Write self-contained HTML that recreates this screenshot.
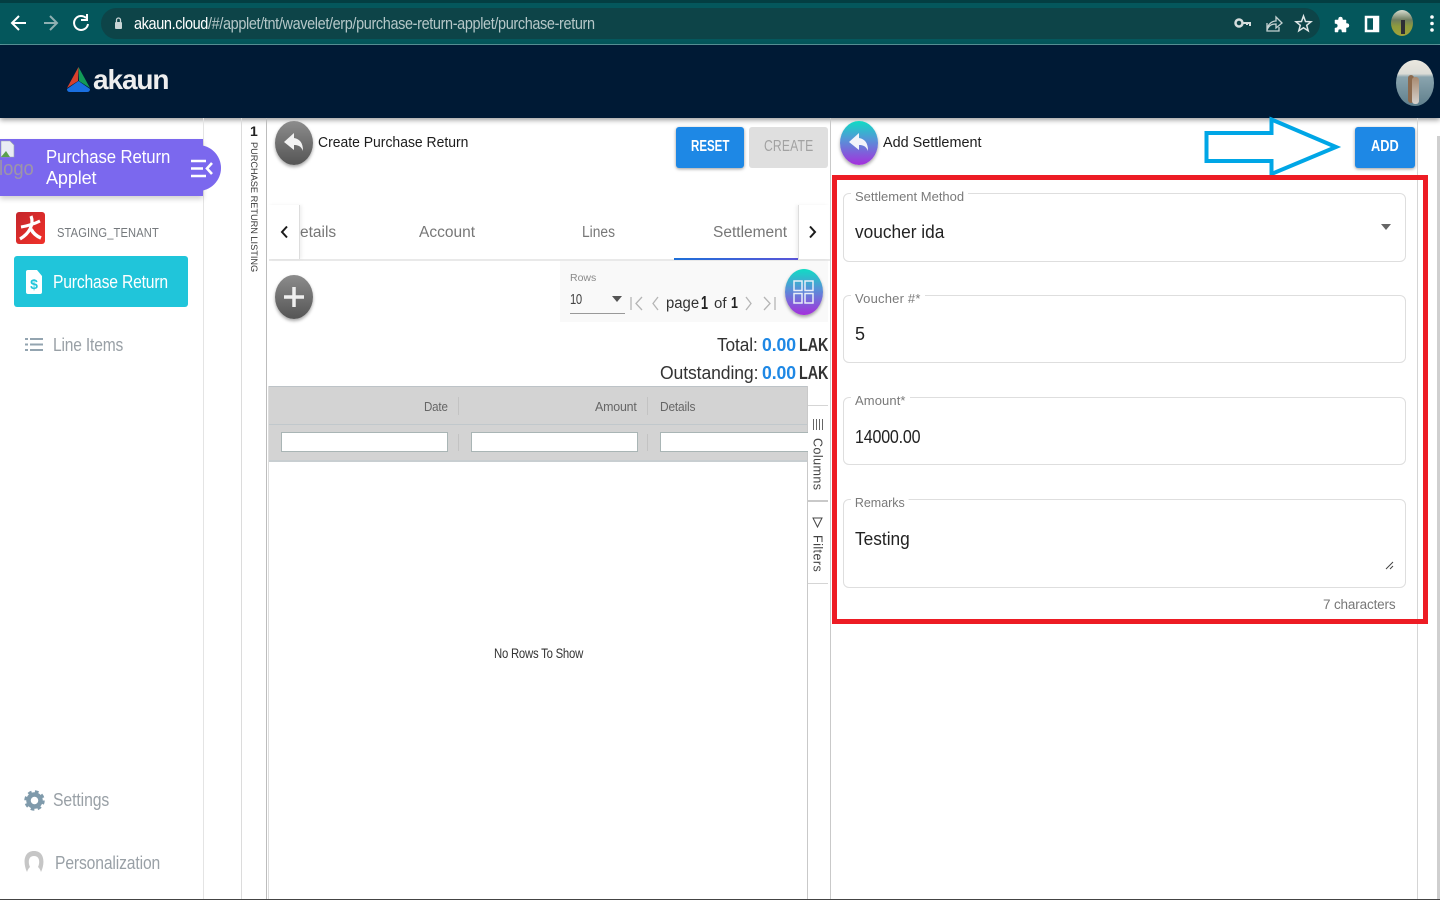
<!DOCTYPE html>
<html><head><meta charset="utf-8"><title>Akaun</title>
<style>
html,body{margin:0;padding:0;width:1440px;height:900px;overflow:hidden;background:#fff;font-family:"Liberation Sans",sans-serif}
.a{position:absolute}
.t{position:absolute;white-space:nowrap;line-height:1;transform-origin:left top}
.fs{position:absolute;left:843px;width:561px;border:1px solid #dedede;border-radius:6px;background:#fff}
.lb{position:absolute;left:851px;background:#fff;padding:0 4px;color:#7a7a7a;font-size:13px;line-height:14px;white-space:nowrap}
.val{position:absolute;left:855px;font-size:18px;line-height:20px;color:#222;white-space:nowrap;transform-origin:left top}
.ball{position:absolute;width:38px;height:44px;border-radius:50%;box-shadow:0 2px 3px rgba(0,0,0,.35)}
.g{background:linear-gradient(#8c8c8c,#555)}
.c{background:linear-gradient(#10dcc4,#5a8fd8 45%,#a52fdc)}
.fi{position:absolute;top:432px;height:18px;background:#fff;border:1px solid #a9b5b5}
</style></head><body>

<!-- browser bar -->
<div class="a" style="left:0;top:0;width:1440px;height:44px;background:#04575c"></div>
<div class="a" style="left:0;top:0;width:1440px;height:3px;background:#033e42"></div>
<div class="a" style="left:0;top:44px;width:1440px;height:1px;background:#5b9a9d"></div>
<div class="a" style="left:101px;top:8px;width:1219px;height:31px;border-radius:16px;background:#0d4448"></div>
<svg class="a" style="left:0;top:-1px" width="130" height="44" fill="none" stroke-width="2">
<path d="M26 24H13M19 17l-7 7 7 7" stroke="#fff"/>
<path d="M44 24h12M50 17l7 7-7 7" stroke="#8fb0b2"/>
<path d="M86 19a7 7 0 1 0 2 6M87 15v6h-6" stroke="#fff"/>
<rect x="115" y="23" width="7" height="7" rx="1" fill="#c9d5d6" stroke="none"/><path d="M116.500 23v-2a2 2 0 0 1 4 0v2" stroke="#c9d5d6" stroke-width="1.300"/>
</svg>
<div class="t" style="left:134px;top:16px;font-size:16.500px;letter-spacing:-.42px;color:#fff;transform:scaleX(.877)">akaun.cloud<span style="color:#b5c7c8">/#/applet/tnt/wavelet/erp/purchase-return-applet/purchase-return</span></div>
<svg class="a" style="left:1230px;top:8px" width="210" height="30" fill="none">
<circle cx="9" cy="15" r="3.500" stroke="#d5dddd" stroke-width="2.500"/><path d="M12 15h8v3M17 15v2" stroke="#d5dddd" stroke-width="2"/>
<path d="M37 15v8h12v-4M37 22c1-7 6-9 9-9v-4l6 6-6 5v-4c-4 0-7 1-9 6z" stroke="#c5d2d2" stroke-width="1.300"/>
<path d="M73.500 8l2 5.500 5.500.300-4.300 3.500 1.500 5.500-4.700-3-4.700 3 1.500-5.500-4.300-3.500 5.500-.300z" stroke="#dfe6e6" stroke-width="1.500"/>
<path d="M105 12h3.500v-1a2 2 0 0 1 4 0v1h3.500v3.500h1a2 2 0 0 1 0 4h-1V24h-4v-1a2 2 0 0 0-4 0v1h-3v-4h1a2.300 2.300 0 0 0 0-4.500h-1z" fill="#fff" stroke="#fff" stroke-width=".5"/>
<rect x="136" y="9" width="12" height="14" stroke="#fff" stroke-width="2.500"/><rect x="143" y="9" width="5" height="14" fill="#fff"/>
<circle cx="202" cy="9" r="1.800" fill="#fff"/><circle cx="202" cy="15.500" r="1.800" fill="#fff"/><circle cx="202" cy="22" r="1.800" fill="#fff"/>
</svg>
<div class="a" style="left:1391px;top:10px;width:22px;height:26px;border-radius:50%;background:linear-gradient(#d8ddd0 0,#6f7d60 38%,#8d9a3e 62%,#a3a33a);overflow:hidden"><div class="a" style="left:10px;top:10px;width:4px;height:14px;background:#2e2e35"></div></div>

<!-- app header -->
<div class="a" style="left:0;top:45px;width:1440px;height:73px;background:#001a35;box-shadow:0 2px 5px rgba(0,0,0,.4)"></div>
<svg class="a" style="left:66px;top:66px" width="26" height="28">
<path d="M12.500 1L1 22l11-7z" fill="#d8402c"/><path d="M12.500 1L24 22l-11-7z" fill="#129a58"/><path d="M12.500 15L1 23q0 3 3 3h17q3 0 3-3z" fill="#1a6fe0"/>
</svg>
<div class="t" style="left:93px;top:66px;font-size:28px;font-weight:bold;letter-spacing:-1.100px;color:#eee;line-height:28px">akaun</div>
<div class="a" style="left:1396px;top:60px;width:38px;height:46px;border-radius:50%;background:linear-gradient(#ebe8e0 0,#dcdcd6 30%,#8aa4ae 37%,#5f7f8c 100%);overflow:hidden">
<div class="a" style="left:12px;top:15px;width:6px;height:28px;border-radius:3px;background:#8c6a4e"></div>
<div class="a" style="left:16px;top:17px;width:7px;height:27px;border-radius:3px;background:linear-gradient(#a88a70,#d6d2ce)"></div></div>

<!-- sidebar -->
<div class="a" style="left:203px;top:118px;width:1px;height:782px;background:#e4e4e4"></div>
<div class="a" style="left:241px;top:118px;width:1px;height:782px;background:#dcdcdc"></div>
<div class="a" style="left:266px;top:118px;width:1px;height:782px;background:#bdbdbd"></div>
<div class="a" style="left:0;top:139px;width:203px;height:57px;background:#7b68ee;box-shadow:0 3px 5px rgba(0,0,0,.18)"></div>
<div class="a" style="left:190px;top:145px;width:31px;height:46px;border-radius:0 23px 23px 0;background:#7b68ee"></div>
<svg class="a" style="left:0;top:140px" width="16" height="20"><path d="M1 1h9l4 4v12H1z" fill="#e9edf4" stroke="#9aa" stroke-width=".6"/><path d="M1 17l5-6 4 6z" fill="#5aa04e"/></svg>
<div class="t" style="left:-1px;top:159px;font-size:20px;color:#9d95a8;transform:scaleX(.92)">logo</div>
<div class="t" style="left:46px;top:148px;font-size:18px;letter-spacing:-.1px;color:#fff;transform:scaleX(.93)">Purchase Return</div>
<div class="t" style="left:46px;top:169px;font-size:18px;letter-spacing:-.1px;color:#fff">Applet</div>
<svg class="a" style="left:190px;top:159px" width="24" height="20" fill="none" stroke="#fff" stroke-width="2.600"><path d="M1 2h15M1 9.500h12M1 17h15M22 4l-5 5.500 5 5.500"/></svg>
<div class="a" style="left:16px;top:212px;width:29px;height:32px;border-radius:3px;background:linear-gradient(135deg,#c4262b,#f0312a)"></div>
<svg class="a" style="left:16px;top:212px" width="29" height="32" fill="none" stroke="#fff"><path d="M15 4c2 5 1 9-1 13-2 4-5 7-10 10" stroke-width="3.200"/><path d="M5 15c6-1 13-3 19-6" stroke-width="3"/><path d="M15 17c2 4 5 7 10 9" stroke-width="3.600"/></svg>
<div class="t" style="left:57px;top:226px;font-size:13px;letter-spacing:.15px;color:#75797d;transform:scaleX(.857)">STAGING_TENANT</div>
<div class="a" style="left:14px;top:256px;width:174px;height:51px;border-radius:3px;background:#20c5da"></div>
<svg class="a" style="left:26px;top:270px" width="17" height="24"><path d="M2 0h9l5 6v16q0 2-2 2H2q-2 0-2-2V2q0-2 2-2z" fill="#fff"/><text x="8" y="19" font-size="14" font-weight="bold" font-family="Liberation Sans" fill="#20c5da" text-anchor="middle">$</text></svg>
<div class="t" style="left:53px;top:273px;font-size:18px;letter-spacing:-.2px;color:#fff;transform:scaleX(.87)">Purchase Return</div>
<svg class="a" style="left:25px;top:337px" width="19" height="15" stroke="#93a4b0" stroke-width="2"><path d="M0 2h3M5 2h13M0 7.500h3M5 7.500h13M0 13h3M5 13h13"/></svg>
<div class="t" style="left:53px;top:336px;font-size:18px;letter-spacing:-.2px;color:#99a0a6;transform:scaleX(.865)">Line Items</div>
<svg class="a" style="left:24px;top:789px" width="21" height="23"><circle cx="10.500" cy="11.500" r="6" fill="none" stroke="#7f9aab" stroke-width="4.500"/><circle cx="10.500" cy="11.500" r="8.500" fill="none" stroke="#7f9aab" stroke-width="3.500" stroke-dasharray="3.500 3.200"/></svg>
<div class="t" style="left:53px;top:791px;font-size:18px;letter-spacing:-.1px;color:#99a0a6;transform:scaleX(.875)">Settings</div>
<svg class="a" style="left:24px;top:850px" width="20" height="22"><path d="M3 22C-1 14-1 1 10 1s11 13 7 21c-1-3-2-4-3-5 2-4 2-11-4-11S4 13 6 17c-1 1-2 2-3 5z" fill="#c6c6c6"/></svg>
<div class="t" style="left:55px;top:854px;font-size:18px;letter-spacing:-.15px;color:#99a0a6;transform:scaleX(.87)">Personalization</div>

<!-- vertical listing -->
<div class="t" style="left:250px;top:124px;font-size:14px;font-weight:bold;color:#222">1</div>
<div class="t" style="left:249px;top:142px;font-size:9.200px;color:#3a3a3a;writing-mode:vertical-rl">PURCHASE RETURN LISTING</div>

<!-- middle panel -->
<div class="ball g" style="left:275px;top:121px"></div>
<svg class="a" style="left:283px;top:132px" width="22" height="22"><path d="M11 1L1 10l10 8v-5c4 0 7 1 9 6 0-8-3-12-9-13z" fill="#f2f2f2"/></svg>
<div class="t" style="left:318px;top:135px;font-size:15px;color:#1d1d1d;transform:scaleX(.93)">Create Purchase Return</div>
<div class="a" style="left:676px;top:127px;width:68px;height:41px;border-radius:3px;background:#1e88e5;box-shadow:0 1px 3px rgba(0,0,0,.4)"></div>
<div class="t" style="left:691px;top:139px;font-size:16px;font-weight:bold;color:#fff;transform:scaleX(.72)">RESET</div>
<div class="a" style="left:749px;top:127px;width:79px;height:41px;border-radius:3px;background:#dfdfdf"></div>
<div class="t" style="left:764px;top:139px;font-size:16px;letter-spacing:.2px;color:#a2a2a2;transform:scaleX(.76)">CREATE</div>

<div class="t" style="left:300px;top:225px;font-size:15.500px;color:#777">etails</div>
<div class="t" style="left:419px;top:225px;font-size:15.500px;color:#777">Account</div>
<div class="t" style="left:582px;top:225px;font-size:15.500px;color:#777;transform:scaleX(.89)">Lines</div>
<div class="t" style="left:713px;top:225px;font-size:15.500px;color:#777">Settlement</div>
<div class="a" style="left:269px;top:259px;width:561px;height:2px;background:#e9e9e9"></div>
<div class="a" style="left:674px;top:258px;width:124px;height:2px;background:linear-gradient(90deg,#1d6fd8,#5a55d8)"></div>
<div class="a" style="left:268px;top:205px;width:31px;height:54px;background:#fff;border-right:1px solid #ddd;box-shadow:2px 0 3px rgba(0,0,0,.06)"></div>
<div class="a" style="left:798px;top:205px;width:30px;height:54px;background:#fff;border-left:1px solid #ddd;box-shadow:-2px 0 3px rgba(0,0,0,.06)"></div>
<svg class="a" style="left:280px;top:225px" width="10" height="14" fill="none" stroke="#1b1b1b" stroke-width="2"><path d="M7 1.500L2 7l5 5.500"/></svg>
<svg class="a" style="left:808px;top:225px" width="10" height="14" fill="none" stroke="#1b1b1b" stroke-width="2"><path d="M2 1.500L7 7l-5 5.500"/></svg>

<div class="ball g" style="left:275px;top:275px"></div>
<svg class="a" style="left:284px;top:287px" width="20" height="20" stroke="#efefef" stroke-width="3.500"><path d="M10 0v20M0 10h20"/></svg>

<div class="a" style="left:560px;top:261px;width:268px;height:61px;background:#f9f9f9"></div>
<div class="t" style="left:570px;top:273px;font-size:10.500px;color:#8a8a8a">Rows</div>
<div class="t" style="left:570px;top:292px;font-size:15px;letter-spacing:-.5px;color:#444;transform:scaleX(.75)">10</div>
<svg class="a" style="left:612px;top:296px" width="10" height="6"><path d="M0 0h10L5 6z" fill="#555"/></svg>
<div class="a" style="left:570px;top:313px;width:55px;height:1px;background:#999"></div>
<svg class="a" style="left:628px;top:296px" width="150" height="15" fill="none" stroke="#b5b5b5" stroke-width="1.300"><path d="M3 1v13M14 1L8 7.500l6 6.500M30 1l-5 6.500 5 6.500M118 1l5 6.500-5 6.500M136 1l6 6.500-6 6.500M147 1v13"/></svg>
<div class="t" style="left:666px;top:296px;font-size:15.500px;color:#333;transform:scaleX(.96)">page</div>
<div class="t" style="left:701px;top:294px;font-size:18px;font-weight:bold;color:#222;transform:scaleX(.7)">1</div>
<div class="t" style="left:714px;top:296px;font-size:15px;color:#333">of</div>
<div class="t" style="left:731px;top:296px;font-size:15.500px;font-weight:bold;color:#222;transform:scaleX(.8)">1</div>
<div class="ball c" style="left:785px;top:269px;height:46px"></div>
<svg class="a" style="left:793px;top:280px" width="21" height="24" fill="none" stroke="#e8eef8" stroke-width="1.500"><rect x="1" y="1" width="8" height="9.500"/><rect x="12" y="1" width="8" height="9.500"/><rect x="1" y="13.500" width="8" height="9.500"/><rect x="12" y="13.500" width="8" height="9.500"/></svg>

<div class="t" style="left:717px;top:336px;font-size:18px;color:#333;letter-spacing:-.1px;transform:scaleX(.96)">Total:</div>
<div class="t" style="left:762px;top:336px;font-size:18px;font-weight:bold;color:#1e88e5;letter-spacing:-.1px;transform:scaleX(.98)">0.00</div>
<div class="t" style="left:799px;top:336px;font-size:18px;font-weight:bold;color:#333;letter-spacing:-.1px;transform:scaleX(.8)">LAK</div>
<div class="t" style="left:660px;top:364px;font-size:18px;color:#333;letter-spacing:-.1px;transform:scaleX(.975)">Outstanding:</div>
<div class="t" style="left:762px;top:364px;font-size:18px;font-weight:bold;color:#1e88e5;letter-spacing:-.1px;transform:scaleX(.98)">0.00</div>
<div class="t" style="left:799px;top:364px;font-size:18px;font-weight:bold;color:#333;letter-spacing:-.1px;transform:scaleX(.8)">LAK</div>

<!-- grid -->
<div class="a" style="left:268px;top:386px;width:1px;height:514px;background:#ddd"></div>
<div class="a" style="left:807px;top:386px;width:1px;height:514px;background:#c9c9c9"></div>
<div class="a" style="left:269px;top:386px;width:538px;height:38px;background:#d3d3d3;border-top:1px solid #bdc3c7;box-sizing:border-box"></div>
<div class="a" style="left:269px;top:424px;width:538px;height:1px;background:#c1c8cc"></div>
<div class="a" style="left:269px;top:425px;width:538px;height:35px;background:#d3d3d3"></div>
<div class="a" style="left:269px;top:460px;width:538px;height:2px;background:#c8ced1"></div>
<div class="t" style="left:424px;top:400px;font-size:13px;letter-spacing:-.2px;color:#666;transform:scaleX(.89)">Date</div>
<div class="t" style="left:595px;top:400px;font-size:13px;letter-spacing:-.2px;color:#666;transform:scaleX(.955)">Amount</div>
<div class="t" style="left:660px;top:400px;font-size:13px;letter-spacing:-.2px;color:#666;transform:scaleX(.92)">Details</div>
<div class="a" style="left:458px;top:397px;width:1px;height:18px;background:#c3c3c3"></div>
<div class="a" style="left:647px;top:397px;width:1px;height:18px;background:#c3c3c3"></div>
<div class="a" style="left:458px;top:434px;width:1px;height:17px;background:#c3c3c3"></div>
<div class="a" style="left:647px;top:434px;width:1px;height:17px;background:#c3c3c3"></div>
<div class="fi" style="left:281px;width:165px"></div>
<div class="fi" style="left:471px;width:165px"></div>
<div class="fi" style="left:660px;width:147px;border-right:0"></div>
<div class="t" style="left:494px;top:647px;font-size:13.500px;letter-spacing:-.27px;color:#333;transform:scaleX(.84)">No Rows To Show</div>

<!-- side buttons -->
<div class="a" style="left:808px;top:386px;width:20px;height:514px;background:#fff"></div>
<div class="a" style="left:808px;top:405px;width:20px;height:1px;background:#d5d5d5"></div>
<div class="a" style="left:808px;top:500px;width:20px;height:2px;background:#c9c9c9"></div>
<div class="a" style="left:808px;top:583px;width:20px;height:1px;background:#d5d5d5"></div>
<svg class="a" style="left:812px;top:419px" width="11" height="11" stroke="#666" stroke-width="1"><path d="M1.500 0v11M4.500 0v11M7.500 0v11M10.500 0v11"/></svg>
<div class="t" style="left:811px;top:438px;font-size:12.500px;letter-spacing:.45px;color:#444;writing-mode:vertical-rl">Columns</div>
<svg class="a" style="left:812px;top:517px" width="11" height="11" fill="none" stroke="#444" stroke-width="1"><path d="M1 1h9L5.500 10z"/></svg>
<div class="t" style="left:811px;top:535px;font-size:12.500px;letter-spacing:.45px;color:#444;writing-mode:vertical-rl">Filters</div>

<!-- right panel -->
<div class="a" style="left:830px;top:118px;width:1px;height:782px;background:#c9c9c9"></div>
<div class="a" style="left:1417px;top:118px;width:1px;height:782px;background:#d5d5d5"></div>
<div class="a" style="left:1437px;top:136px;width:3px;height:764px;background:#cfcfcf"></div>
<div class="ball c" style="left:840px;top:121px"></div>
<svg class="a" style="left:848px;top:132px" width="22" height="22"><path d="M11 1L1 10l10 8v-5c4 0 7 1 9 6 0-8-3-12-9-13z" fill="#f2f4fa"/></svg>
<div class="t" style="left:883px;top:135px;font-size:15px;color:#1d1d1d;transform:scaleX(.96)">Add Settlement</div>
<div class="a" style="left:1355px;top:127px;width:60px;height:41px;border-radius:3px;background:#1e88e5;box-shadow:0 1px 3px rgba(0,0,0,.4)"></div>
<div class="t" style="left:1371px;top:139px;font-size:16px;font-weight:bold;color:#fff;transform:scaleX(.8)">ADD</div>
<svg class="a" style="left:1200px;top:114px" width="145" height="64" fill="#fff" stroke="#00a6e6" stroke-width="4"><path d="M6.500 19H71.500V5.500L136 33 71.500 60V47H6.500z"/></svg>

<div class="fs" style="top:193px;height:67px"></div>
<div class="lb" style="top:190px">Settlement Method</div>
<div class="val" style="top:222px;transform:scaleX(.96)">voucher ida</div>
<svg class="a" style="left:1381px;top:224px" width="10" height="6"><path d="M0 0h10L5 6z" fill="#666"/></svg>

<div class="fs" style="top:295px;height:66px"></div>
<div class="lb" style="top:292px;letter-spacing:.2px">Voucher #*</div>
<div class="val" style="top:324px">5</div>

<div class="fs" style="top:397px;height:66px"></div>
<div class="lb" style="top:394px;letter-spacing:.1px">Amount*</div>
<div class="val" style="top:427px;letter-spacing:-.2px;transform:scaleX(.89)">14000.00</div>

<div class="fs" style="top:499px;height:87px"></div>
<div class="lb" style="top:496px;transform:scaleX(.96);transform-origin:left top">Remarks</div>
<div class="val" style="top:529px;transform:scaleX(.96)">Testing</div>
<svg class="a" style="left:1385px;top:561px" width="9" height="9" stroke="#444" stroke-width="1"><path d="M1 8l7-7M5 8l3-3"/></svg>
<div class="t" style="left:1323px;top:598px;font-size:13.500px;letter-spacing:-.15px;color:#777">7 characters</div>

<!-- red annotation -->
<div class="a" style="left:832px;top:175px;width:596px;height:449px;box-sizing:border-box;border:5px solid #ed1c24"></div>
<div class="a" style="left:0;top:899px;width:1440px;height:1px;background:#444"></div>
</body></html>
